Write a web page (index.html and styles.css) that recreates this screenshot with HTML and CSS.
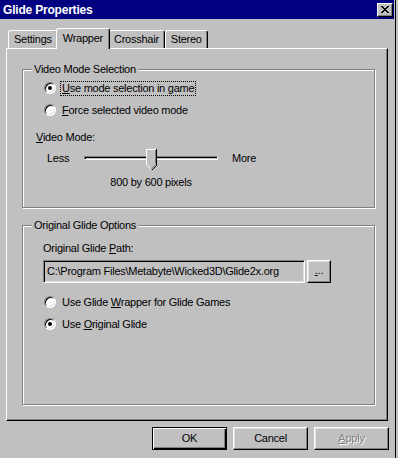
FILE: index.html
```html
<!DOCTYPE html>
<html lang="en">
<head>
    <meta charset="UTF-8">
    <title>Glide Properties</title>
    <link rel="stylesheet" href="styles.css">
</head>
<body>
    <div class="window">
        <div class="titlebar">
            <span class="title">Glide Properties</span>
            <div class="close">
                <svg width="8" height="7" viewBox="0 0 8 7" shape-rendering="crispEdges"><path d="M0 0h2v1H0zM6 0h2v1H6zM1 1h2v1H1zM5 1h2v1H5zM2 2h4v1H2zM3 3h2v1H3zM2 4h4v1H2zM1 5h2v1H1zM5 5h2v1H5zM0 6h2v1H0zM6 6h2v1H6z" fill="#000"/></svg>
            </div>
        </div>

        <div class="tabs">
            <div class="tab">Settings</div>
            <div class="tab active">Wrapper</div>
            <div class="tab">Crosshair</div>
            <div class="tab">Stereo</div>
        </div>

        <div class="panel">
            <div class="group first">
                <div class="group-title">Video Mode Selection</div>
                <div class="option">
                    <span class="radio on"></span>
                    <span class="focus"><u>U</u>se mode selection in game</span>
                </div>
                <div class="option">
                    <span class="radio"></span>
                    <span class="label"><u>F</u>orce selected video mode</span>
                </div>
                <div class="caption"><u>V</u>ideo Mode:</div>
                <div class="slider-row">
                    <span class="slider-end">Less</span>
                    <div class="track">
                        <svg class="thumb" width="11" height="21" viewBox="0 0 11 21" shape-rendering="crispEdges">
                            <path d="M0 0H11V16L6 21H5L0 16Z" fill="#c0c0c0"/>
                            <path d="M0 0H10V1H1V16H0Z" fill="#fff"/>
                            <path d="M10 0H11V16H10ZM10 16L5 21H6L11 16Z" fill="#000"/>
                            <path d="M9 1H10V15H9ZM9 16L5 20V19L9 15Z" fill="#808080"/>
                            <path d="M1 16L5 20V21L0 16Z" fill="#fff"/>
                        </svg>
                    </div>
                    <span class="slider-end more">More</span>
                </div>
                <div class="slider-value">800 by 600 pixels</div>
            </div>

            <div class="group second">
                <div class="group-title">Original Glide Options</div>
                <div class="caption path-label">Original Glide <u>P</u>ath:</div>
                <div class="path-row">
                    <div class="field">C:\Program Files\Metabyte\Wicked3D\Glide2x.org</div>
                    <div class="btn browse"><u>.</u>..</div>
                </div>
                <div class="option spaced">
                    <span class="radio"></span>
                    <span class="label">Use Glide <u>W</u>rapper for Glide Games</span>
                </div>
                <div class="option">
                    <span class="radio on"></span>
                    <span class="label">Use <u>O</u>riginal Glide</span>
                </div>
            </div>
        </div>

        <div class="buttons">
            <div class="btn default">OK</div>
            <div class="btn">Cancel</div>
            <div class="btn disabled"><u>A</u>pply</div>
        </div>
    </div>
</body>
</html>
```

FILE: styles.css
```css
body {
    margin: 0;
    background-color: #c0c0c0;
    font-family: "Liberation Sans", Arial, sans-serif;
    font-size: 11px;
    letter-spacing: -0.25px;
    color: #000;
}

u {
    text-underline-offset: 1px;
}

.window {
    width: 395px;
    height: 458px;
    border-right: 1px solid #000;
}

.titlebar {
    height: 19px;
    margin-right: 1px;
    background-color: #000080;
    display: flex;
    align-items: center;
    justify-content: space-between;
}

.title {
    padding-left: 3px;
    color: #fff;
    font-weight: bold;
    font-size: 12px;
    letter-spacing: -0.2px;
}

.close {
    width: 16px;
    height: 14px;
    margin-right: 1px;
    box-sizing: border-box;
    background-color: #c0c0c0;
    border: 1px solid;
    border-color: #fff #000 #000 #fff;
    box-shadow: inset -1px -1px 0 #808080;
    display: flex;
    align-items: center;
    justify-content: center;
}

.tabs {
    display: flex;
    align-items: flex-end;
    height: 20px;
    margin-top: 9px;
    padding-left: 8px;
}

.tab {
    height: 18px;
    box-sizing: border-box;
    padding: 0 5px;
    line-height: 17px;
    border: 1px solid;
    border-bottom: none;
    border-color: #fff #000 #000 #fff;
    border-radius: 3px 3px 0 0;
    box-shadow: inset -1px 0 0 #808080;
    background-color: #c0c0c0;
}

.tab.active {
    position: relative;
    z-index: 1;
    height: 21px;
    margin: 0 -2px -1px;
    padding: 0 6px;
    line-height: 18px;
}

.panel {
    width: 382px;
    height: 373px;
    margin-left: 6px;
    box-sizing: border-box;
    border: 1px solid;
    border-color: #fff #000 #000 #fff;
    box-shadow: inset -1px -1px 0 #808080;
    overflow: hidden;
}

.group {
    margin: 0 12px 0 15px;
    border: 1px solid #808080;
    box-shadow: inset 1px 1px 0 #fff, 1px 1px 0 #fff;
}

.group.first {
    margin-top: 20px;
    padding-bottom: 18px;
}

.group.second {
    margin-top: 17px;
    padding-bottom: 69px;
}

.group-title {
    display: table;
    margin: -7px 0 0 9px;
    padding: 0 2px;
    line-height: 13px;
    background-color: #c0c0c0;
}

.option {
    display: flex;
    align-items: center;
    height: 22px;
    padding-left: 21px;
}

.group-title + .option {
    margin-top: 1px;
}

.option.spaced {
    margin-top: 8px;
}

.radio {
    width: 12px;
    height: 12px;
    box-sizing: border-box;
    border-radius: 50%;
    border: 1px solid;
    border-color: #808080 #fff #fff #808080;
    box-shadow: inset 1px 1px 0 #000, inset -1px -1px 0 #dfdfdf;
    background-color: #fff;
    display: flex;
    align-items: center;
    justify-content: center;
    margin-right: 4px;
}

.radio.on::after {
    content: "";
    width: 4px;
    height: 4px;
    border-radius: 50%;
    background-color: #000;
}

.label {
    padding: 1px 2px;
    line-height: 13px;
}

.focus {
    padding: 0 1px;
    line-height: 13px;
    border: 1px dotted #000;
}

.caption {
    margin-top: 10px;
    padding-left: 13px;
    line-height: 13px;
}

.path-label {
    padding-left: 20px;
}

.slider-row {
    display: flex;
    align-items: center;
    height: 22px;
    margin-top: 3px;
    padding-left: 24px;
}

.slider-end {
    width: 37px;
}

.slider-end.more {
    margin-left: 14px;
}

.track {
    position: relative;
    width: 134px;
    height: 4px;
    box-sizing: border-box;
    border: 1px solid;
    border-color: #808080 #fff #fff #808080;
    box-shadow: inset 1px 1px 0 #000;
    background-color: #c0c0c0;
}

.thumb {
    position: absolute;
    left: 61px;
    top: -8px;
    display: block;
}

.slider-value {
    width: 134px;
    margin: 7px 0 0 61px;
    line-height: 13px;
    text-align: center;
}

.path-row {
    display: flex;
    gap: 2px;
    margin-top: 5px;
    padding-left: 20px;
}

.field {
    width: 262px;
    height: 23px;
    box-sizing: border-box;
    padding-left: 3px;
    line-height: 21px;
    border: 1px solid;
    border-color: #808080 #fff #fff #808080;
    box-shadow: inset 1px 1px 0 #000, inset -1px -1px 0 #dfdfdf;
    white-space: nowrap;
    overflow: hidden;
}

.btn {
    width: 75px;
    height: 23px;
    box-sizing: border-box;
    line-height: 21px;
    text-align: center;
    border: 1px solid;
    border-color: #fff #000 #000 #fff;
    box-shadow: inset -1px -1px 0 #808080, inset 1px 1px 0 #dfdfdf;
    background-color: #c0c0c0;
}

.btn.browse {
    width: 24px;
    line-height: 19px;
}

.btn.default {
    border-color: #000;
    box-shadow: inset 1px 1px 0 #fff, inset -1px -1px 0 #000, inset -2px -2px 0 #808080;
}

.btn.disabled {
    color: #808080;
    text-shadow: 1px 1px 0 #fff;
}

.buttons {
    display: flex;
    justify-content: flex-end;
    gap: 6px;
    margin-top: 6px;
    padding-right: 6px;
}
```
